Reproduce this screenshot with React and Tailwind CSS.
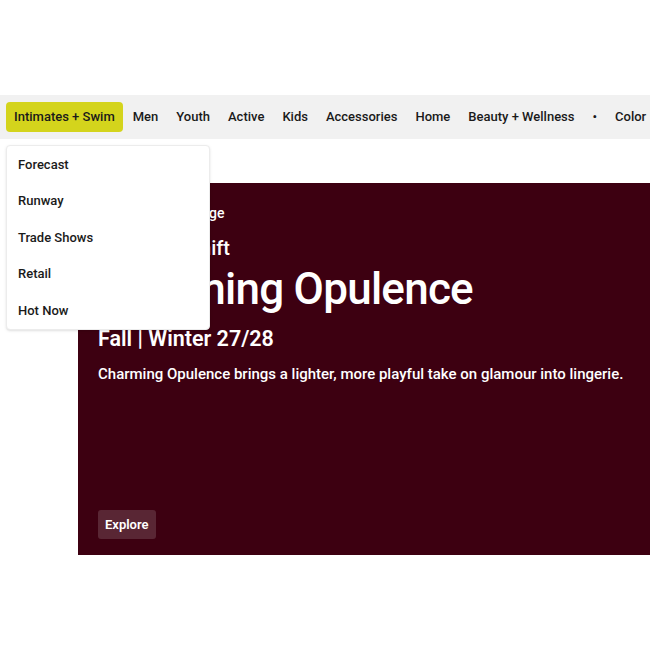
const navItems = [
	"Men",
	"Youth",
	"Active",
	"Kids",
	"Accessories",
	"Home",
	"Beauty + Wellness",
	"•",
	"Color",
];

const menuItems = ["Forecast", "Runway", "Trade Shows", "Retail", "Hot Now"];

export default function App() {
	return (
		<div
			className="w-[650px] h-[650px] overflow-hidden bg-white pt-[95px]"
			style={{ fontFamily: "Roboto, 'Liberation Sans', sans-serif" }}
		>
			<nav className="flex items-center gap-[2px] bg-[#f1f1f1] px-[6px] py-[7px] whitespace-nowrap">
				<span className="rounded-[4px] bg-[#d4d41c] px-2 h-[30px] flex items-center text-[13px] font-medium text-[#1a1a1a]">
					Intimates + Swim
				</span>
				{navItems.map((item) => (
					<span
						key={item}
						className="px-2 h-[30px] flex items-center text-[13px] font-medium text-[#1a1a1a]"
					>
						{item}
					</span>
				))}
			</nav>

			<div className="relative pt-[44px]">
				<div className="absolute left-[6px] top-[6px] z-10 w-[204px] rounded-[4px] border border-[#ececec] bg-white shadow-sm">
					{menuItems.map((item) => (
						<div
							key={item}
							className="h-[36.6px] flex items-center px-[11px] text-[13px] font-medium text-[#1a1a1a]"
						>
							{item}
						</div>
					))}
				</div>

				<section className="ml-[78px] h-[372px] bg-[#3d0011] px-5 pt-[22px] pb-4 flex flex-col text-white">
					<p className="text-[14px] font-medium leading-[16px]">Sleepwear + Lounge</p>
					<p className="mt-[15px] text-[20px] font-medium leading-[24px]">Aesthetic Shift</p>
					<h1 className="mt-[5px] text-[44px] font-medium leading-[48px] tracking-[-0.75px]">Charming Opulence</h1>
					<p className="mt-[13px] text-[21.5px] font-semibold leading-[26px]">Fall | Winter 27/28</p>
					<p className="mt-[13px] text-[15px] font-medium leading-[18px]">
						Charming Opulence brings a lighter, more playful take on glamour into lingerie.
					</p>
					<div className="mt-auto">
						<button className="h-[29px] rounded-[3px] bg-white/15 px-[7px] text-[13px] font-semibold text-white">
							Explore
						</button>
					</div>
				</section>
			</div>
		</div>
	);
}
